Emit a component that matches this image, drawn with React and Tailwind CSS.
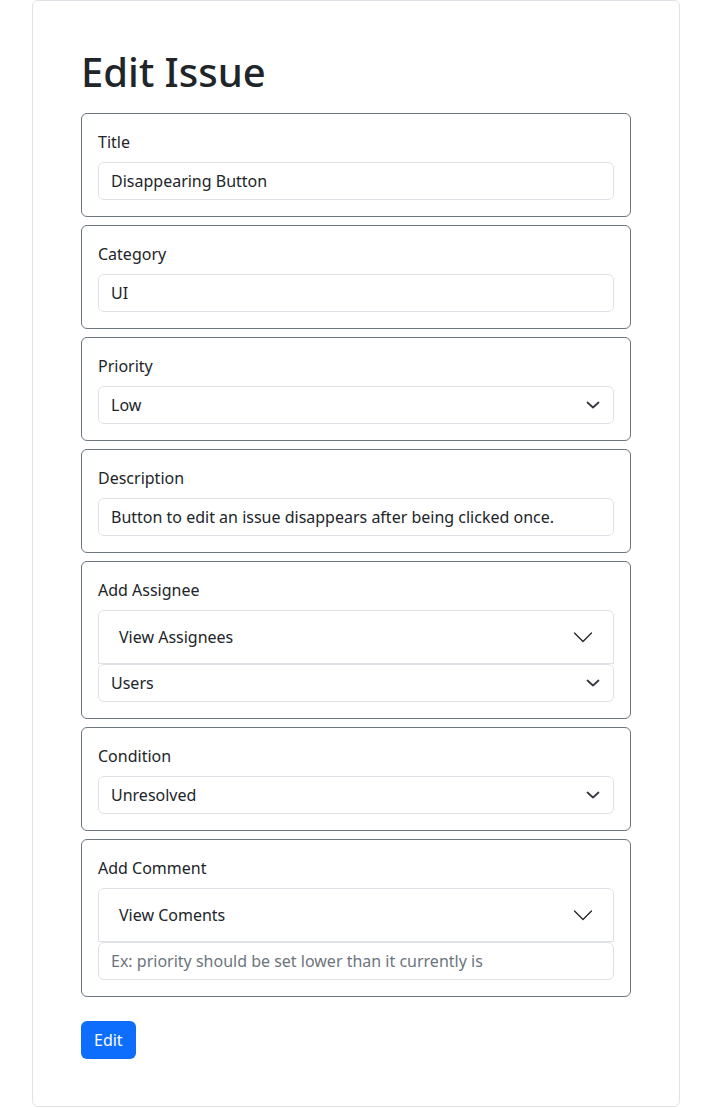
import React from "react";

// Bootstrap-like chevron for selects
const SelectChevron = () => (
  <svg width="16" height="12" viewBox="0 0 16 12" className="shrink-0">
    <path d="M2.5 3.5 8 8.5l5.5-5" fill="none" stroke="#343a40" strokeWidth="1.8" strokeLinecap="round" strokeLinejoin="round" />
  </svg>
);

const AccordionChevron = () => (
  <svg width="20" height="20" viewBox="0 0 20 20" className="shrink-0">
    <path d="M1.5 6 10 14.5 18.5 6" fill="none" stroke="#212529" strokeWidth="1.3" strokeLinecap="round" strokeLinejoin="round" />
  </svg>
);

const Box = ({ label, children }) => (
  <div className="border border-[#6c757d] rounded-md px-4 pt-4 pb-4">
    <div className="leading-6 mb-2">{label}</div>
    {children}
  </div>
);

const Input = ({ value, placeholder }) => (
  <div className="h-[38px] border border-[#dee2e6] rounded-md px-3 flex items-center leading-6">
    {value ? <span>{value}</span> : <span className="text-[#6c757d]">{placeholder}</span>}
  </div>
);

const Select = ({ value }) => (
  <div className="h-[38px] border border-[#dee2e6] rounded-md pl-3 pr-3 flex items-center justify-between leading-6">
    <span>{value}</span>
    <SelectChevron />
  </div>
);

const Accordion = ({ label }) => (
  <div className="h-[54px] border border-[#dee2e6] rounded-t-md px-5 flex items-center justify-between">
    <span>{label}</span>
    <AccordionChevron />
  </div>
);

export default function App() {
  return (
    <div className="min-h-screen bg-white text-[#212529] text-base" style={{ fontFamily: '"Noto Sans", sans-serif' }}>
      <div className="mx-[32px] w-[648px] border border-[#dee2e6] rounded-md px-12 pt-[47px] pb-[47px]">
        <h1 className="text-[40px] font-medium leading-[48px] mb-[17px]">Edit Issue</h1>

        <div className="flex flex-col gap-2">
          <Box label="Title">
            <Input value="Disappearing Button" />
          </Box>
          <Box label="Category">
            <Input value="UI" />
          </Box>
          <Box label="Priority">
            <Select value="Low" />
          </Box>
          <Box label="Description">
            <Input value="Button to edit an issue disappears after being clicked once." />
          </Box>
          <Box label="Add Assignee">
            <Accordion label="View Assignees" />
            <Select value="Users" />
          </Box>
          <Box label="Condition">
            <Select value="Unresolved" />
          </Box>
          <Box label="Add Comment">
            <Accordion label="View Coments" />
            <Input placeholder="Ex: priority should be set lower than it currently is" />
          </Box>
        </div>

        <button className="mt-6 h-[38px] px-[13px] rounded-md bg-[#0d6efd] text-white leading-6">Edit</button>
      </div>
    </div>
  );
}
